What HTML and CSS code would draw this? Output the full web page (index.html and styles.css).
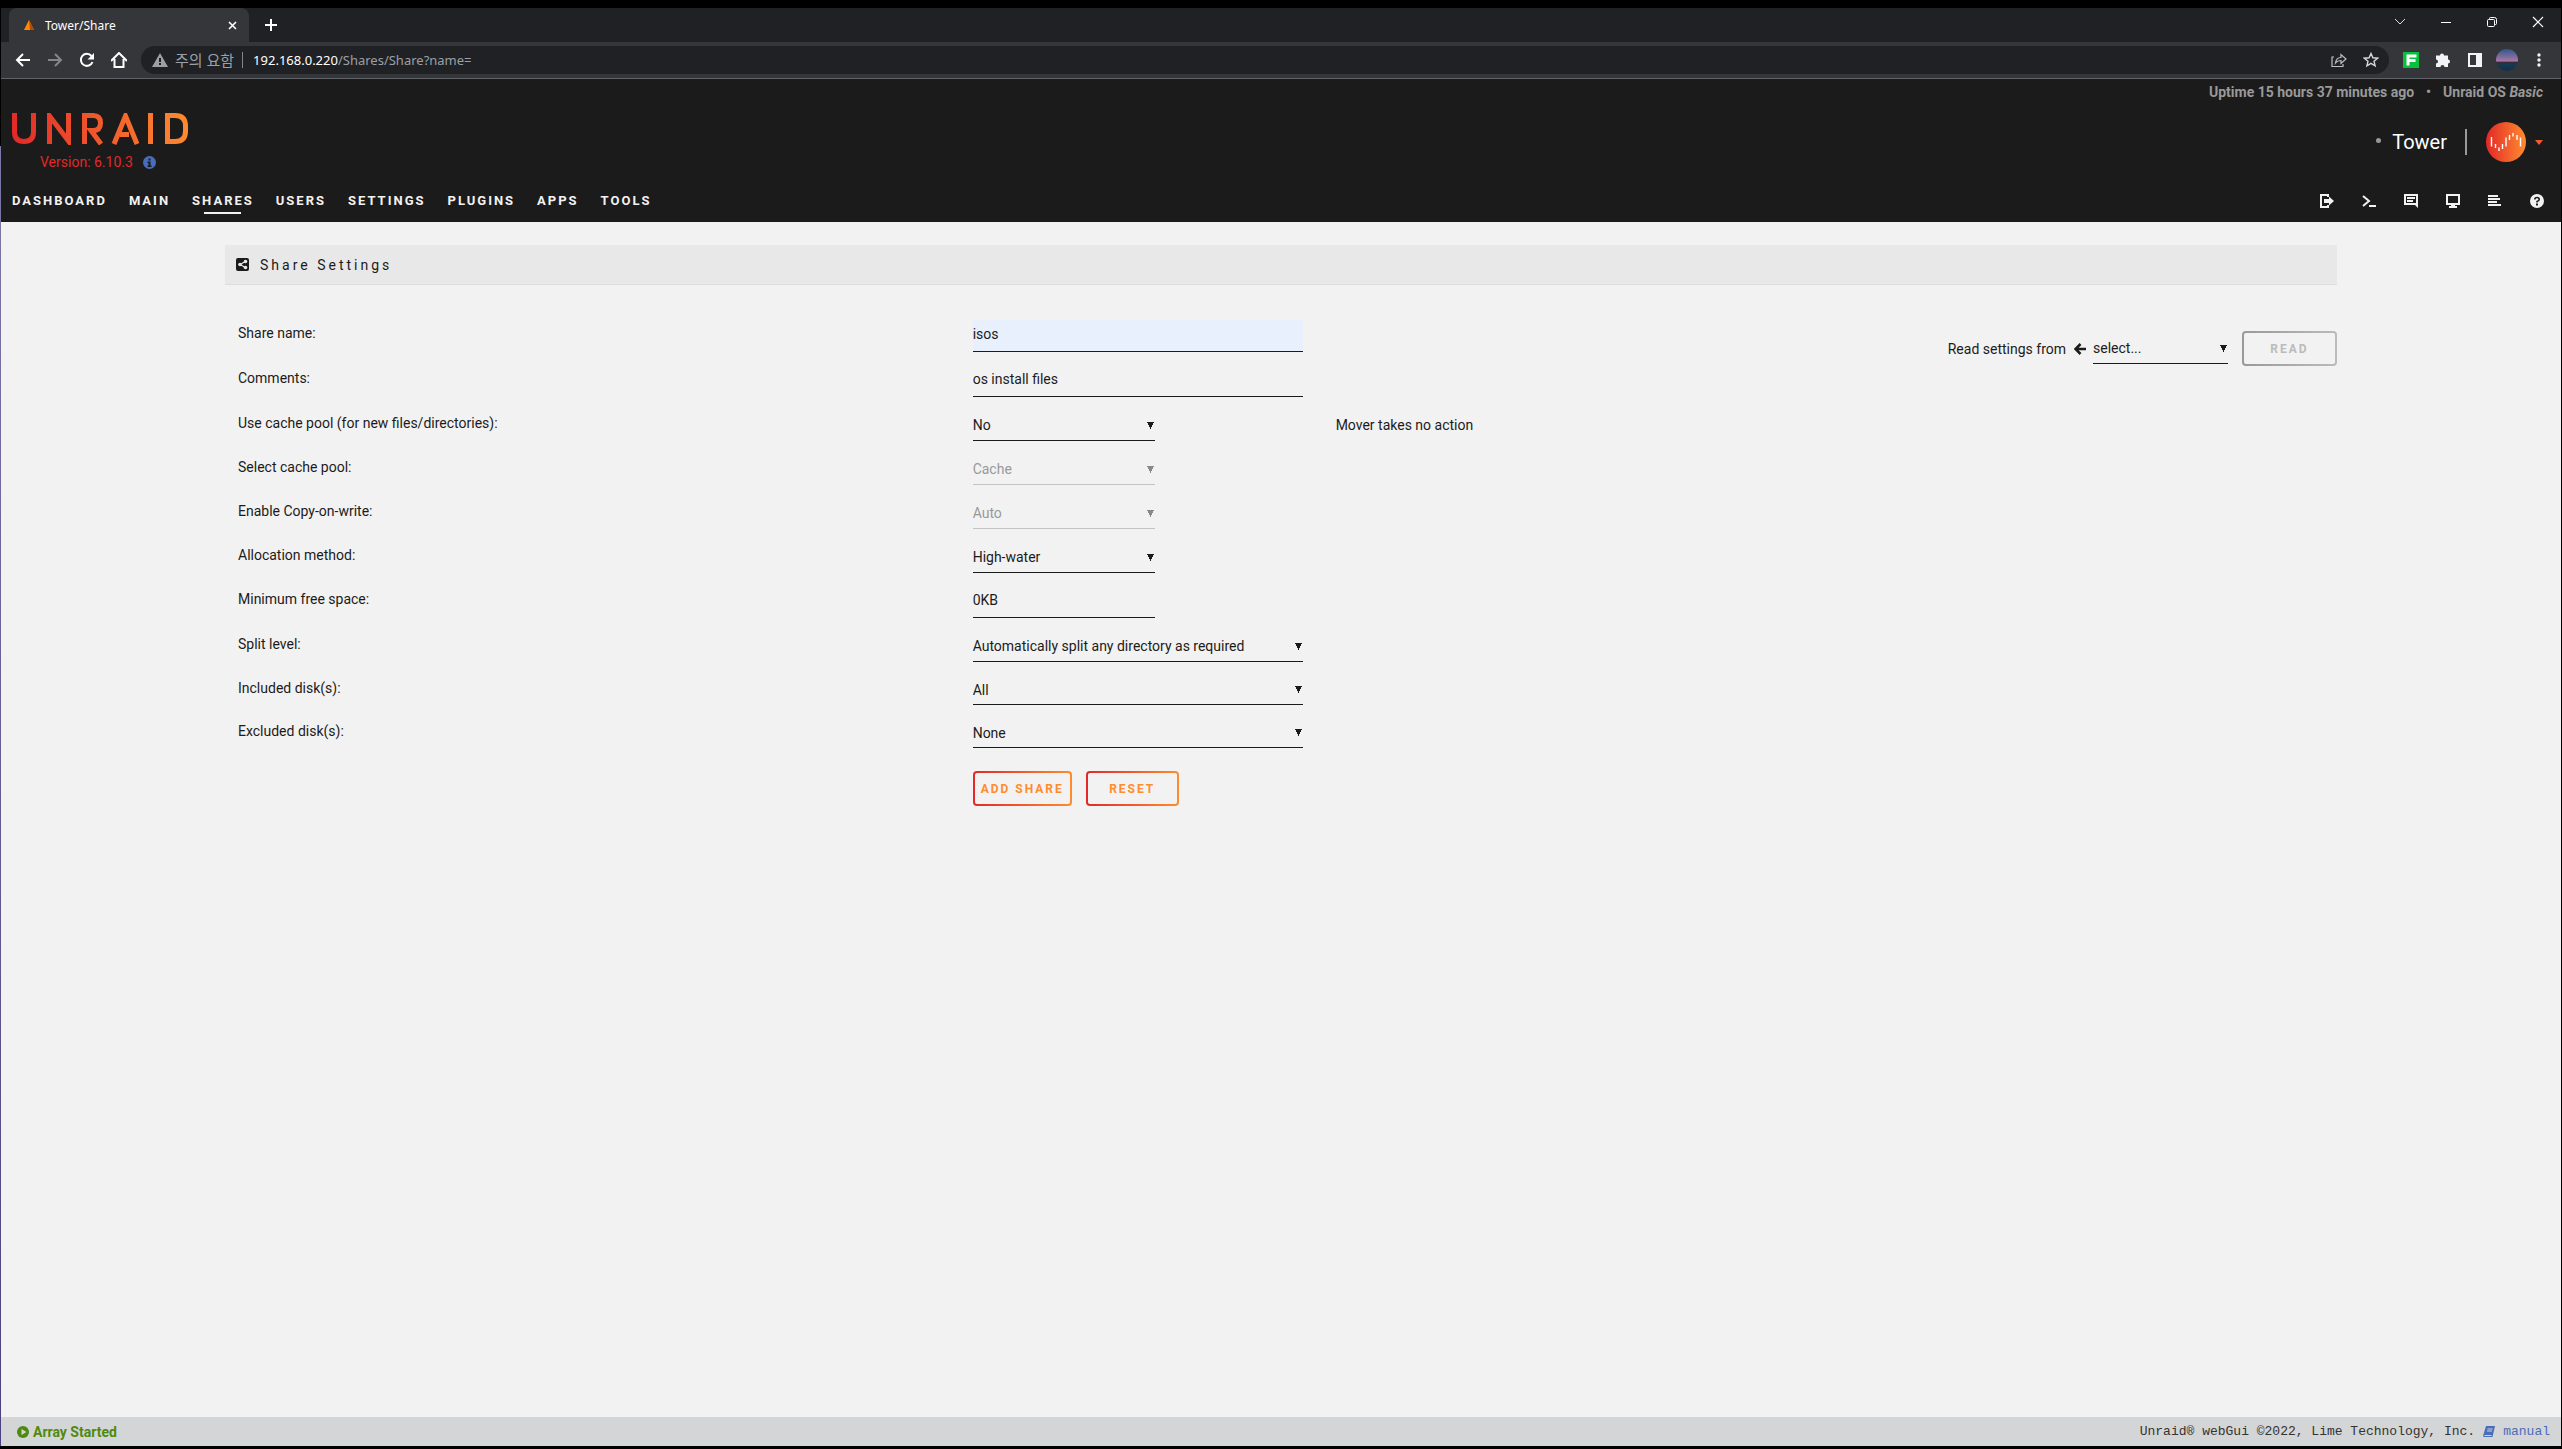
FILE: index.html
```
<!DOCTYPE html>
<html lang="en">
<head>
    <meta charset="UTF-8">
    <meta name="viewport" content="width=device-width, initial-scale=1.0">
    <title>Tower/Share</title>
    <link rel="stylesheet" href="styles.css">
</head>
<body>

    <!-- browser window -->
    <div class="tab-strip">
        <div class="tab">
            <svg class="favicon" viewBox="0 0 12 12"><path d="M6 1L11 11H1z" fill="#ff8c00"/><path d="M6 1L11 11H7z" fill="#b34a00"/></svg>
            <span class="tab-title">Tower/Share</span>
            <button class="tab-close" aria-label="Close tab"><svg width="9" height="9" viewBox="0 0 9 9" stroke="#fff" stroke-width="1.6"><path d="M1 1l7 7M8 1l-7 7"/></svg></button>
        </div>
        <button class="new-tab" aria-label="New tab"><svg width="12" height="12" viewBox="0 0 12 12" stroke="#fff" stroke-width="2"><path d="M6 0v12M0 6h12"/></svg></button>
        <div class="window-controls">
            <button aria-label="Search tabs"><svg width="12" height="12" viewBox="0 0 12 12" fill="none" stroke="#ddd"><path d="M1 3l5 5 5-5"/></svg></button>
            <button aria-label="Minimize"><svg width="12" height="12" viewBox="0 0 12 12" stroke="#fff"><path d="M1 6.500h10"/></svg></button>
            <button aria-label="Restore"><svg width="12" height="12" viewBox="0 0 12 12" fill="none" stroke="#fff"><rect x="1.500" y="3.500" width="7" height="7" rx="1"/><path d="M3.500 3.500V2.500q0-1 1-1h4q2 0 2 2v4q0 1-1 1h-1"/></svg></button>
            <button aria-label="Close"><svg width="12" height="12" viewBox="0 0 12 12" stroke="#fff" stroke-width="1.200"><path d="M1 1l10 10M11 1L1 11"/></svg></button>
        </div>
    </div>

    <div class="toolbar">
        <button aria-label="Back"><svg width="16" height="16" viewBox="0 0 16 16" fill="none" stroke="#fff" stroke-width="2"><path d="M15 8H2M8 2L2 8l6 6"/></svg></button>
        <button aria-label="Forward"><svg width="16" height="16" viewBox="0 0 16 16" fill="none" stroke="#84868a" stroke-width="2"><path d="M1 8h13M8 2l6 6-6 6"/></svg></button>
        <button aria-label="Reload"><svg width="16" height="16" viewBox="0 0 16 16"><path d="M13.500 10A6 6 0 1 1 12.500 4" fill="none" stroke="#fff" stroke-width="2"/><path d="M15 1v6.500H8.500z" fill="#fff"/></svg></button>
        <button aria-label="Home"><svg width="16" height="16" viewBox="0 0 16 16" fill="none" stroke="#fff" stroke-width="2"><path d="M0 9l8-8 8 8M3.500 7v8h9V7"/></svg></button>
        <div class="address">
            <svg width="16" height="14" viewBox="0 0 16 14"><path d="M8 0l8 14H0z" fill="#9aa0a6"/><path d="M7 5h2v4H7zM7 10h2v2H7z" fill="#202124"/></svg>
            <span class="insecure" lang="ko">주의 요함</span>
            <span class="url"><b>192.168.0.220</b>/Shares/Share?name=</span>
            <button aria-label="Share page"><svg width="16" height="16" viewBox="0 0 16 16" fill="none" stroke="#bdc1c6" stroke-width="1.200"><path d="M3 5H1v9.500h11V12M4.500 11c.5-4 2-5.500 5.500-5.500V2.500L15 7l-5 4.500V8.500c-2.500 0-4 .5-5.500 2.500z"/></svg></button>
            <button aria-label="Bookmark"><svg width="16" height="16" viewBox="0 0 16 16" fill="none" stroke="#d5d7da" stroke-width="1.400"><path d="M8 1.500l1.900 4.300 4.700.4-3.600 3 1.100 4.600L8 11.400l-4.100 2.400L5 9.200l-3.600-3 4.700-.4z"/></svg></button>
        </div>
        <div class="extensions">
            <button aria-label="Extension"><svg width="16" height="16" viewBox="0 0 16 16"><path d="M0 0h16v16H0z" fill="#06c13c"/><path d="M3.500 2.500h10v3h-7v1.500h6v3h-6v3.500h-3z" fill="#fff"/></svg></button>
            <button aria-label="Extensions"><svg width="16" height="16" viewBox="0 0 16 16"><path d="M1 3.500h4a2 2 0 1 1 4 0h4v4a2 2 0 1 1 0 4V15H9.500a2 2 0 1 0-4 0H1v-3.500a2 2 0 1 0 0-4z" fill="#f1f3f4"/></svg></button>
            <button aria-label="Side panel"><svg width="16" height="16" viewBox="0 0 16 16"><path d="M1 1h14v14H1zM3 3v10h6V3z" fill="#f1f3f4" fill-rule="evenodd"/></svg></button>
            <button class="profile" aria-label="Profile"></button>
            <button aria-label="Menu"><svg width="16" height="16" viewBox="0 0 16 16" fill="#f1f3f4"><circle cx="8" cy="3" r="1.700"/><circle cx="8" cy="8" r="1.700"/><circle cx="8" cy="13" r="1.700"/></svg></button>
        </div>
    </div>

    <div class="page">
        <header>
            <div class="brand">
                <svg class="logo" viewBox="0 0 176 32" role="img" aria-label="Unraid">
                    <defs>
                        <linearGradient id="brand" gradientUnits="userSpaceOnUse" x1="0" y1="32" x2="176" y2="0">
                            <stop offset="0" stop-color="#e22828"/>
                            <stop offset="1" stop-color="#ff8c2f"/>
                        </linearGradient>
                    </defs>
                    <g fill="none" stroke="url(#brand)" stroke-width="5">
                        <path d="M2.500 0V19Q2.500 28.500 12 28.500T21.500 19V0"/>
                        <path d="M37.500 31V3L56.500 28V0"/>
                        <path d="M72.500 31V2.500H81Q88.500 2.500 88.500 10T81 17.500H79L89 31"/>
                        <path d="M102 31L113.500 3L125 31M108 21.500H117"/>
                        <path d="M138.500 0V31"/>
                        <path d="M155.500 2.500V28.500H163Q173.500 28.500 173.500 18V13Q173.500 2.500 163 2.500Z"/>
                    </g>
                </svg>
                <div class="version">Version: 6.10.3
                    <svg width="13" height="13" viewBox="0 0 13 13"><circle cx="6.500" cy="6.500" r="6.500" fill="#486dba"/><path d="M5.500 2.500h2v2h-2zM4.500 5.500h3V9.500h1V11h-4V9.500h1V7h-1z" fill="#1c1b1b"/></svg>
                </div>
            </div>
            <div class="server">
                <div class="uptime"><span>Uptime 15 hours 37 minutes ago</span><span>•</span><span>Unraid OS <em>Basic</em></span></div>
                <div class="account">
                    <span class="bullet"></span>
                    <span class="server-name">Tower</span>
                    <svg class="avatar" viewBox="0 0 40 40">
                        <defs><linearGradient id="avatar"><stop offset="0" stop-color="#e22828"/><stop offset="1" stop-color="#ff8c2f"/></linearGradient></defs>
                        <circle cx="20" cy="20" r="20" fill="url(#avatar)"/>
                        <path d="M5.500 15v9.500M9.500 22v4M13 25.500v3.500M16.500 22v5M20 15.500v9M23.500 13v5M27 11v3.500M31 13v5M34.500 15.500v9" stroke="#fff" stroke-width="1.400"/>
                    </svg>
                    <svg width="8" height="5" viewBox="0 0 8 5"><path d="M0 0h8L4 5z" fill="#f15a2c"/></svg>
                </div>
            </div>
        </header>

        <nav>
            <ul class="menu">
                <li><a href="#">Dashboard</a></li>
                <li><a href="#">Main</a></li>
                <li><a href="#" class="active">Shares</a></li>
                <li><a href="#">Users</a></li>
                <li><a href="#">Settings</a></li>
                <li><a href="#">Plugins</a></li>
                <li><a href="#">Apps</a></li>
                <li><a href="#">Tools</a></li>
            </ul>
            <div class="nav-tools">
                <a href="#" aria-label="Logout"><svg viewBox="0 0 14 14"><path d="M0 0h9v3H7V2H2v10h5v-1h2v3H0z"/><path d="M4 5h5V2.500L14 7l-5 4.500V9H4z"/></svg></a>
                <a href="#" aria-label="Terminal"><svg viewBox="0 0 14 14"><path d="M1 2l6 5-6 5" fill="none" stroke="#f2f2f2" stroke-width="2"/><path d="M7 11h7v2H7z"/></svg></a>
                <a href="#" aria-label="Feedback"><svg viewBox="0 0 14 14"><path d="M0 0h14v14l-3-3H0zM2 2v7h10V2z" fill-rule="evenodd"/><path d="M3 3h8v2H3zM3 6h6v2H3z"/></svg></a>
                <a href="#" aria-label="Info"><svg viewBox="0 0 14 14"><path d="M0 0h14v11H9v1h2v2H3v-2h2v-1H0zM2 2v7h10V2z" fill-rule="evenodd"/></svg></a>
                <a href="#" aria-label="Log"><svg viewBox="0 0 14 14"><path d="M0 1h10v2H0zM0 4h12v2H0zM0 7h9v2H0zM0 10h13v2H0z"/></svg></a>
                <a href="#" aria-label="Help"><svg viewBox="0 0 14 14"><circle cx="7" cy="7" r="7"/><path d="M4.800 5.500Q4.800 3.500 7 3.500T9.200 5.400Q9.200 6.500 7 7.500V8.500" fill="none" stroke="#1c1b1b" stroke-width="1.600"/><path d="M6 9.500h2v2H6z" fill="#1c1b1b"/></svg></a>
            </div>
        </nav>

        <main>
            <h1>
                <svg width="13" height="13" viewBox="0 0 13 13"><rect width="13" height="13" rx="2" fill="#1c1b1b"/><path d="M9.500 3.500L4 6.500l5.500 3" fill="none" stroke="#e8e8e8" stroke-width="1.200"/><g fill="#e8e8e8"><circle cx="9.500" cy="3.500" r="1.800"/><circle cx="4" cy="6.500" r="1.800"/><circle cx="9.500" cy="9.500" r="1.800"/></g></svg>
                Share Settings
            </h1>

            <div class="columns">
                <form class="settings">
                    <div class="row"><label for="shareName">Share name:</label><input type="text" id="shareName" class="wide autofill" value="isos"></div>
                    <div class="row"><label for="shareComment">Comments:</label><input type="text" id="shareComment" class="wide" value="os install files"></div>
                    <div class="row select-row"><label for="useCache">Use cache pool (for new files/directories):</label><span class="field"><select id="useCache"><option>No</option></select></span><span class="hint">Mover takes no action</span></div>
                    <div class="row select-row"><label for="cachePool">Select cache pool:</label><select id="cachePool" disabled><option>Cache</option></select></div>
                    <div class="row select-row"><label for="cow">Enable Copy-on-write:</label><select id="cow" disabled><option>Auto</option></select></div>
                    <div class="row select-row"><label for="allocator">Allocation method:</label><select id="allocator"><option>High-water</option></select></div>
                    <div class="row"><label for="floor">Minimum free space:</label><input type="text" id="floor" value="0KB"></div>
                    <div class="row select-row"><label for="splitLevel">Split level:</label><select id="splitLevel" class="wide"><option>Automatically split any directory as required</option></select></div>
                    <div class="row disk-row"><label for="include">Included disk(s):</label><select id="include" class="wide"><option>All</option></select></div>
                    <div class="row disk-row"><label for="exclude">Excluded disk(s):</label><select id="exclude" class="wide"><option>None</option></select></div>
                    <div class="actions">
                        <button type="button" class="btn">Add Share</button>
                        <button type="reset" class="btn">Reset</button>
                    </div>
                </form>

                <form class="read-settings">
                    <label for="readFrom">Read settings from
                        <svg width="12" height="12" viewBox="0 0 12 12" fill="none" stroke="#1c1b1b" stroke-width="2.500"><path d="M12 6H2M6.500 1L1.500 6l5 5"/></svg>
                    </label>
                    <select id="readFrom"><option>select...</option></select>
                    <button type="button" class="btn" disabled>Read</button>
                </form>
            </div>
        </main>

        <footer>
            <span class="array-status">
                <svg width="12" height="12" viewBox="0 0 12 12"><circle cx="6" cy="6" r="6" fill="#4f8a10"/><path d="M4.500 3l5 3-5 3z" fill="#d4d5d6"/></svg>
                Array Started
            </span>
            <span class="copyright">Unraid® webGui ©2022, Lime Technology, Inc.
                <a href="#"><svg width="12" height="12" viewBox="0 0 12 12"><path d="M3 0h9L9.500 11H1Q-.5 10.500.5 8.500z" fill="#486dba"/><path d="M4.500 3h5M4 5h5M1.500 9.500h7" stroke="#d4d5d6"/></svg> manual</a>
            </span>
        </footer>
    </div>

</body>
</html>
```
FILE: styles.css
```
* {
    box-sizing: border-box;
}
body {
    display: flex;
    flex-direction: column;
    min-height: 100vh;
    margin: 0;
    padding: 8px 1px 3px;
    background: #000;
    color: #1c1b1b;
    font-family: Roboto, "Liberation Sans", sans-serif;
    font-size: 14px;
}
svg {
    display: block;
    flex: none;
}
button {
    display: flex;
    align-items: center;
    justify-content: center;
    padding: 0;
    border: none;
    background: none;
    font-family: inherit;
    cursor: pointer;
}
a {
    color: inherit;
    text-decoration: none;
}

/* browser window */
.tab-strip {
    display: flex;
    height: 34px;
    padding-left: 8px;
    background: #202124;
}
.tab {
    display: flex;
    align-items: center;
    width: 240px;
    padding: 0 12px 0 14px;
    border-radius: 8px 8px 0 0;
    background: #35363a;
    color: #fff;
    font-family: "Noto Sans", sans-serif;
    font-size: 12px;
}
.favicon {
    width: 12px;
    height: 12px;
}
.tab-title {
    flex: 1;
    margin-left: 10px;
}
.new-tab {
    width: 44px;
}
.window-controls {
    display: flex;
    margin-left: auto;
    padding-bottom: 6px;
}
.window-controls button {
    width: 46px;
}
.toolbar {
    display: flex;
    align-items: center;
    height: 37px;
    padding: 0 6px;
    border-bottom: 1px solid #5f6368;
    background: #35363a;
}
.toolbar button {
    width: 32px;
    height: 28px;
}
.address {
    display: flex;
    flex: 1;
    align-items: center;
    height: 28px;
    margin-left: 6px;
    padding: 0 2px 0 11px;
    border-radius: 14px;
    background: #202124;
    color: #9aa0a6;
    font-family: "Noto Sans", "Noto Sans CJK KR", sans-serif;
    font-size: 13px;
}
.insecure {
    margin-left: 7px;
    padding-right: 8px;
    border-right: 1px solid #80868b;
    font-size: 15px;
    line-height: 16px;
}
.url {
    flex: 1;
    margin-left: 10px;
}
.url b {
    color: #fff;
    font-weight: normal;
}
.extensions {
    display: flex;
    align-items: center;
    margin-left: 6px;
}
.toolbar .profile {
    width: 22px;
    height: 22px;
    margin: 0 5px;
    border-radius: 50%;
    background: linear-gradient(#31578c, #a777a5 55%, #3a2a38 60%, #173a50 70%, #12304a);
}

/* header */
.page {
    display: flex;
    flex: 1;
    flex-direction: column;
    margin-left: -1px;
    border-left: 1px solid;
    border-image: linear-gradient(#000 5%, #7b79a8 5%, #4b4080) 1;
    background: #f2f2f2;
}
header {
    display: flex;
    justify-content: space-between;
    height: 91px;
    background: #1c1b1b;
}
.brand {
    padding: 34px 0 0 11px;
}
.logo {
    width: 176px;
    height: 32px;
}
.version {
    display: flex;
    align-items: center;
    gap: 10px;
    margin: 8px 0 0 28px;
    color: #e22828;
    line-height: 18px;
}
.server {
    padding: 4px 18px 0 0;
    color: #999;
}
.uptime {
    display: flex;
    justify-content: flex-end;
    gap: 12px;
    font-weight: bold;
    line-height: 18px;
}
.account {
    display: flex;
    align-items: center;
    justify-content: flex-end;
    margin-top: 21px;
}
.bullet {
    width: 5px;
    height: 5px;
    margin-bottom: 4px;
    border-radius: 50%;
    background: #999;
}
.server-name {
    margin-left: 11px;
    padding-right: 18px;
    border-right: 2px solid #999;
    color: #fff;
    font-size: 20px;
    line-height: 26px;
}
.avatar {
    width: 40px;
    height: 40px;
    margin: 0 9px 0 19px;
}
nav {
    display: flex;
    align-items: center;
    justify-content: space-between;
    height: 52px;
    padding: 10px 17px 0 11px;
    background: #1c1b1b;
    color: #f2f2f2;
}
.menu {
    display: flex;
    gap: 22px;
    margin: 0;
    padding: 0;
    list-style: none;
    font-size: 13px;
    font-weight: bold;
    letter-spacing: 2px;
    text-transform: uppercase;
}
.menu a {
    position: relative;
    display: block;
    line-height: 26px;
}
.menu .active::after {
    content: "";
    position: absolute;
    bottom: 0;
    left: 20%;
    width: 60%;
    height: 2px;
    background: #f2f2f2;
}
.nav-tools {
    display: flex;
    gap: 28px;
}
.nav-tools svg {
    width: 14px;
    height: 14px;
    fill: #f2f2f2;
}

/* share settings */
main {
    flex: 1;
    width: 2112px;
    max-width: 90%;
    margin: 23px auto 0;
}
h1 {
    display: flex;
    align-items: center;
    gap: 11px;
    height: 40px;
    margin: 0;
    padding-left: 11px;
    border-bottom: 1px solid #dedede;
    background: #e8e8e8;
    font-size: 14px;
    font-weight: normal;
    letter-spacing: 3px;
}
.columns {
    display: grid;
    grid-template-columns: 1fr;
}
.settings,
.read-settings {
    grid-area: 1 / 1;
}
.settings {
    padding: 35px 0 0 13px;
}
.row {
    display: flex;
    height: 45px;
}
.select-row {
    height: 44px;
}
.disk-row {
    height: 43px;
}
.row label {
    width: 35%;
    line-height: 26px;
}
.field {
    width: 330px;
}
.hint {
    margin-left: 33px;
    line-height: 30px;
}
input,
select {
    width: 182px;
    height: 32px;
    padding: 0;
    border: none;
    border-bottom: 1px solid #1c1b1b;
    border-radius: 0;
    background-color: transparent;
    color: #1c1b1b;
    font-family: inherit;
    font-size: 14px;
}
input {
    padding-bottom: 3px;
}
select {
    height: 31px;
    appearance: none;
    background-image: conic-gradient(from -27deg at 50% 100%, #1c1b1b 54deg, transparent 0);
    background-position: right 1px center;
    background-repeat: no-repeat;
    background-size: 7px 7px;
}
select:disabled {
    border-color: #c4c4c4;
    background-image: conic-gradient(from -27deg at 50% 100%, #888 54deg, transparent 0);
    color: #999;
    opacity: 1;
}
.disk-row select {
    height: 30px;
}
.wide {
    width: 330px;
}
.autofill {
    background-color: #e8f0fe;
}
.actions {
    display: flex;
    gap: 14px;
    margin: 10px 0 0 35%;
}
.btn {
    min-width: 93px;
    height: 35px;
    padding: 0 6px;
    border: 2px solid transparent;
    border-radius: 4px;
    background: linear-gradient(#f2f2f2, #f2f2f2) padding-box, linear-gradient(90deg, #e22828, #ff8c2f) border-box;
    color: #ff8c2f;
    font-size: 12px;
    font-weight: bold;
    letter-spacing: 2px;
    text-transform: uppercase;
}
.btn:disabled {
    background: linear-gradient(#f2f2f2, #f2f2f2) padding-box, linear-gradient(90deg, #999, #bbb) border-box;
    color: #bbb;
}
.read-settings {
    display: flex;
    align-items: center;
    justify-self: end;
    height: 35px;
    margin-top: 46px;
}
.read-settings label {
    display: flex;
    align-items: center;
    gap: 8px;
    margin-right: 7px;
}
.read-settings select {
    width: 135px;
}
.read-settings .btn {
    min-width: 95px;
    margin-left: 14px;
}

/* footer */
footer {
    display: flex;
    align-items: center;
    justify-content: space-between;
    height: 29px;
    padding: 0 11px 0 16px;
    background: #d4d5d6;
}
.array-status,
.copyright,
.copyright a {
    display: flex;
    align-items: center;
}
.array-status {
    gap: 4px;
    color: #4f8a10;
    font-weight: bold;
}
.copyright {
    gap: 8px;
    color: #333;
    font-family: "Liberation Mono", monospace;
    font-size: 13px;
}
.copyright a {
    gap: 8px;
    color: #486dba;
}
```
